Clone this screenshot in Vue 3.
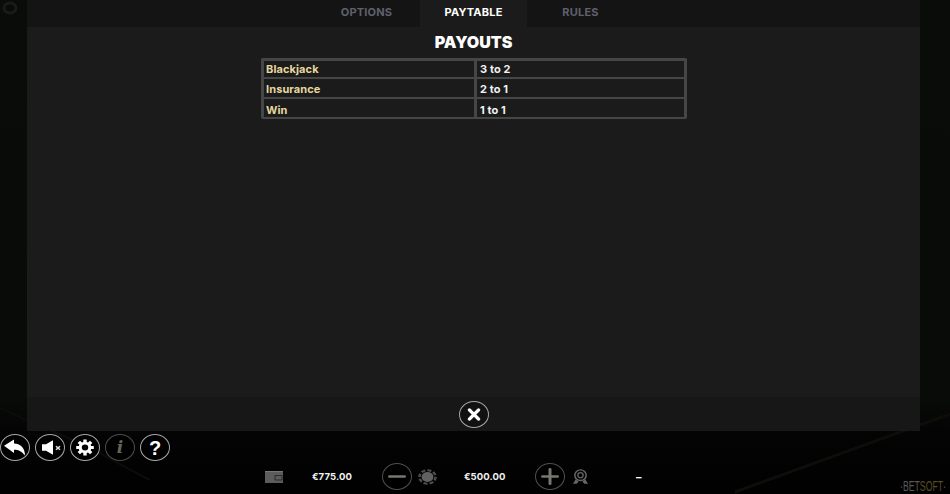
<template>
  <div class="game">
    <svg class="backdrop" viewBox="0 0 950 494" aria-hidden="true">
      <path d="M0 408 C25 420 50 430 75 441 C100 452 120 465 150 480" fill="none" stroke="#0e0c0b" stroke-width="2" />
      <path d="M950 414 C880 440 810 465 735 492" fill="none" stroke="#0e0d0a" stroke-width="3" />
      <ellipse cx="10" cy="8" rx="6" ry="5" fill="none" stroke="#1a1a1a" stroke-width="3" />
    </svg>

    <div class="panel">
      <nav class="tabs">
        <span v-for="tab in tabs" :key="tab" class="tab" :class="{ active: tab === 'PAYTABLE' }">{{ tab }}</span>
      </nav>

      <div class="content">
        <h1 class="title">PAYOUTS</h1>
        <div class="table">
          <div v-for="row in payouts" :key="row.name" class="row" :style="{ height: row.h + 'px' }">
            <span class="cell name">{{ row.name }}</span>
            <span class="cell value">{{ row.value }}</span>
          </div>
        </div>
      </div>

      <div class="panel-foot">
        <button class="round close">
          <svg viewBox="0 0 30 30" width="30" height="27" preserveAspectRatio="none">
            <path d="M10.5 10 L19.5 20 M19.5 10 L10.5 20" stroke="#fff" stroke-width="3.6" stroke-linecap="round" />
          </svg>
        </button>
      </div>
    </div>

    <div class="bottom">
      <div class="tools">
        <button class="round">
          <svg viewBox="0 0 30 30" width="30" height="27" preserveAspectRatio="none">
            <path d="M4 13 L14 6 V10.5 C20 10.5 25 15 25 24 C22 19.5 19 17.5 14 17.5 V21 Z" fill="#fff" />
          </svg>
        </button>
        <button class="round">
          <svg viewBox="0 0 30 30" width="30" height="27" preserveAspectRatio="none">
            <path d="M7 11.5 H11 L18 7 V23 L11 18.5 H7 Z" fill="#fff" />
            <path d="M21 13.5 L25 17.5 M25 13.5 L21 17.5" stroke="#ddd" stroke-width="1.6" />
          </svg>
        </button>
        <button class="round">
          <svg viewBox="0 0 30 30" width="30" height="27" preserveAspectRatio="none">
            <circle cx="15" cy="15" r="6.4" fill="#fff" />
            <path d="M15 6.2 V23.8 M6.2 15 H23.8 M8.8 8.8 L21.2 21.2 M21.2 8.8 L8.8 21.2" stroke="#fff" stroke-width="3.4" />
            <circle cx="15" cy="15" r="3.2" fill="#000" />
          </svg>
        </button>
        <button class="round dim"><span class="info">i</span></button>
        <button class="round"><span class="help">?</span></button>
      </div>

      <div class="status">
        <svg class="wallet" viewBox="0 0 18 12" width="18" height="12">
          <path d="M0 0 H18 V12 H0 Z" fill="#5c5c5c" />
          <path d="M10 4.5 H17 V9 H10 Z" fill="none" stroke="#2a2a2a" stroke-width="1" />
          <path d="M0 0 H18 V1 H0 Z" fill="#777" />
        </svg>
        <span class="amount balance">€775.00</span>
        <button class="round dim-ring">
          <svg viewBox="0 0 30 30" width="30" height="27" preserveAspectRatio="none">
            <path d="M7.5 15 H22.5" stroke="#77776e" stroke-width="3" stroke-linecap="round" />
          </svg>
        </button>
        <svg class="chip" viewBox="0 0 18 18" width="19" height="16" preserveAspectRatio="none">
          <circle cx="9" cy="9" r="7.6" fill="none" stroke="#4d4d4d" stroke-width="2.4" stroke-dasharray="4 1.9" />
          <circle cx="9" cy="9" r="5.6" fill="#616161" />
        </svg>
        <span class="amount bet">€500.00</span>
        <button class="round dim-ring">
          <svg viewBox="0 0 30 30" width="30" height="27" preserveAspectRatio="none">
            <path d="M7.5 15 H22.5 M15 7 V23" stroke="#77776e" stroke-width="3" stroke-linecap="round" />
          </svg>
        </button>
        <svg class="badge" viewBox="0 0 18 18" width="17" height="16" preserveAspectRatio="none">
          <circle cx="9" cy="7" r="6" fill="none" stroke="#666" stroke-width="1.6" />
          <circle cx="9" cy="7" r="2.8" fill="none" stroke="#666" stroke-width="1.4" />
          <path d="M4 11.5 L1 16.5 H5 L7 14 M14 11.5 L17 16.5 H13 L11 14" fill="#666" />
        </svg>
        <span class="dash">–</span>
      </div>

      <span class="logo">·BET<em>SOFT</em>·</span>
    </div>
  </div>
</template>

<script setup>
const tabs = ['OPTIONS', 'PAYTABLE', 'RULES']

// row heights follow the screenshot, they are not quite equal
const payouts = [
  { name: 'Blackjack', value: '3 to 2', h: 18 },
  { name: 'Insurance', value: '2 to 1', h: 20 },
  { name: 'Win', value: '1 to 1', h: 20 },
]
</script>

<style>
html,
body {
  background: #000;
}
</style>

<style scoped>
.game {
  position: relative;
  width: 950px;
  height: 494px;
  overflow: hidden;
  display: flex;
  flex-direction: column;
  background: linear-gradient(#090c09 0, #080b08 400px, #040404 431px, #010101 100%);
  font-family: Inter, "Liberation Sans", sans-serif;
  color: #fff;
}

.backdrop {
  position: absolute;
  inset: 0;
  width: 950px;
  height: 494px;
}

.panel {
  position: relative;
  width: 893px;
  height: 431px;
  margin-left: 27px;
  display: flex;
  flex-direction: column;
  background: #1b1b1b;
}

.tabs {
  height: 27px;
  display: flex;
  justify-content: center;
  background: #141414;
}

.tab {
  width: 107px;
  display: flex;
  align-items: center;
  justify-content: center;
  padding-bottom: 3px;
  box-sizing: border-box;
  font-size: 11px;
  font-weight: 700;
  letter-spacing: 0.2px;
  color: #5f616c;
}

.tab.active {
  background: #1b1b1b;
  color: #fff;
}

.content {
  flex: 1;
  display: flex;
  flex-direction: column;
  align-items: center;
}

.title {
  margin: 6px 0 7px;
  height: 18px;
  line-height: 18px;
  font-size: 16px;
  font-weight: 900;
  color: #fff;
}

.table {
  box-sizing: border-box;
  width: 426px;
  margin-left: 1px;
  border: 3px solid #464646;
  border-bottom: 0;
  border-radius: 2px;
}

.row {
  box-sizing: border-box;
  display: flex;
  border-bottom: 2px solid #464646;
}

.cell {
  display: flex;
  align-items: center;
  font-size: 11px;
  font-weight: 700;
  letter-spacing: 0.1px;
}

.row:first-child .cell {
  padding-bottom: 1px;
}

.row + .row .cell {
  padding-top: 2px;
}

.row:last-child .cell {
  padding-top: 3px;
}

.name {
  box-sizing: border-box;
  width: 213px;
  padding-left: 2px;
  border-right: 3px solid #464646;
  color: #e6d79e;
}

.value {
  flex: 1;
  padding-left: 3px;
  color: #f2f2f2;
}

.panel-foot {
  height: 34px;
  display: flex;
  align-items: center;
  justify-content: center;
  background: #171717;
}

.round {
  width: 30px;
  height: 27px;
  padding: 0;
  border: 1.5px solid #a6a6a6;
  border-radius: 50%;
  background: #000;
  display: flex;
  align-items: center;
  justify-content: center;
  flex: none;
}

.round svg {
  margin: -1.5px;
}

.close {
  background: #111;
}

.bottom {
  position: relative;
  flex: 1;
}

.tools {
  display: flex;
  gap: 5px;
  padding-top: 3px;
}

.round.dim {
  border-color: #4d4d4d;
}

.info {
  font-family: "DejaVu Serif", serif;
  font-style: italic;
  font-weight: 700;
  font-size: 17px;
  line-height: 1;
  color: #66665c;
}

.help {
  font-size: 20px;
  font-weight: 900;
  line-height: 1;
  color: #fff;
}

.status {
  display: flex;
  align-items: center;
  height: 27px;
  margin-top: 2px;
  padding-left: 265px;
}

.wallet {
  flex: none;
}

.amount {
  font-size: 9.5px;
  font-weight: 700;
  letter-spacing: 0.1px;
  color: #f2f2f2;
  white-space: nowrap;
}

.balance {
  width: 70px;
  margin-left: 29px;
}

.round.dim-ring {
  border-color: #4f4f4f;
  border-width: 1.2px;
}

.chip {
  margin-left: 6px;
}

.bet {
  margin-left: 27px;
  width: 71px;
}

.badge {
  margin-left: 7px;
}

.dash {
  margin-left: 47px;
  font-size: 11px;
  font-weight: 700;
}

.logo {
  position: absolute;
  right: 4px;
  bottom: 0;
  font-family: "Liberation Sans", sans-serif;
  font-size: 14px;
  line-height: 15px;
  color: #5a5a5a;
  transform: scaleX(0.62);
  transform-origin: right;
}

.logo em {
  font-style: normal;
  color: #5a4b22;
}
</style>
